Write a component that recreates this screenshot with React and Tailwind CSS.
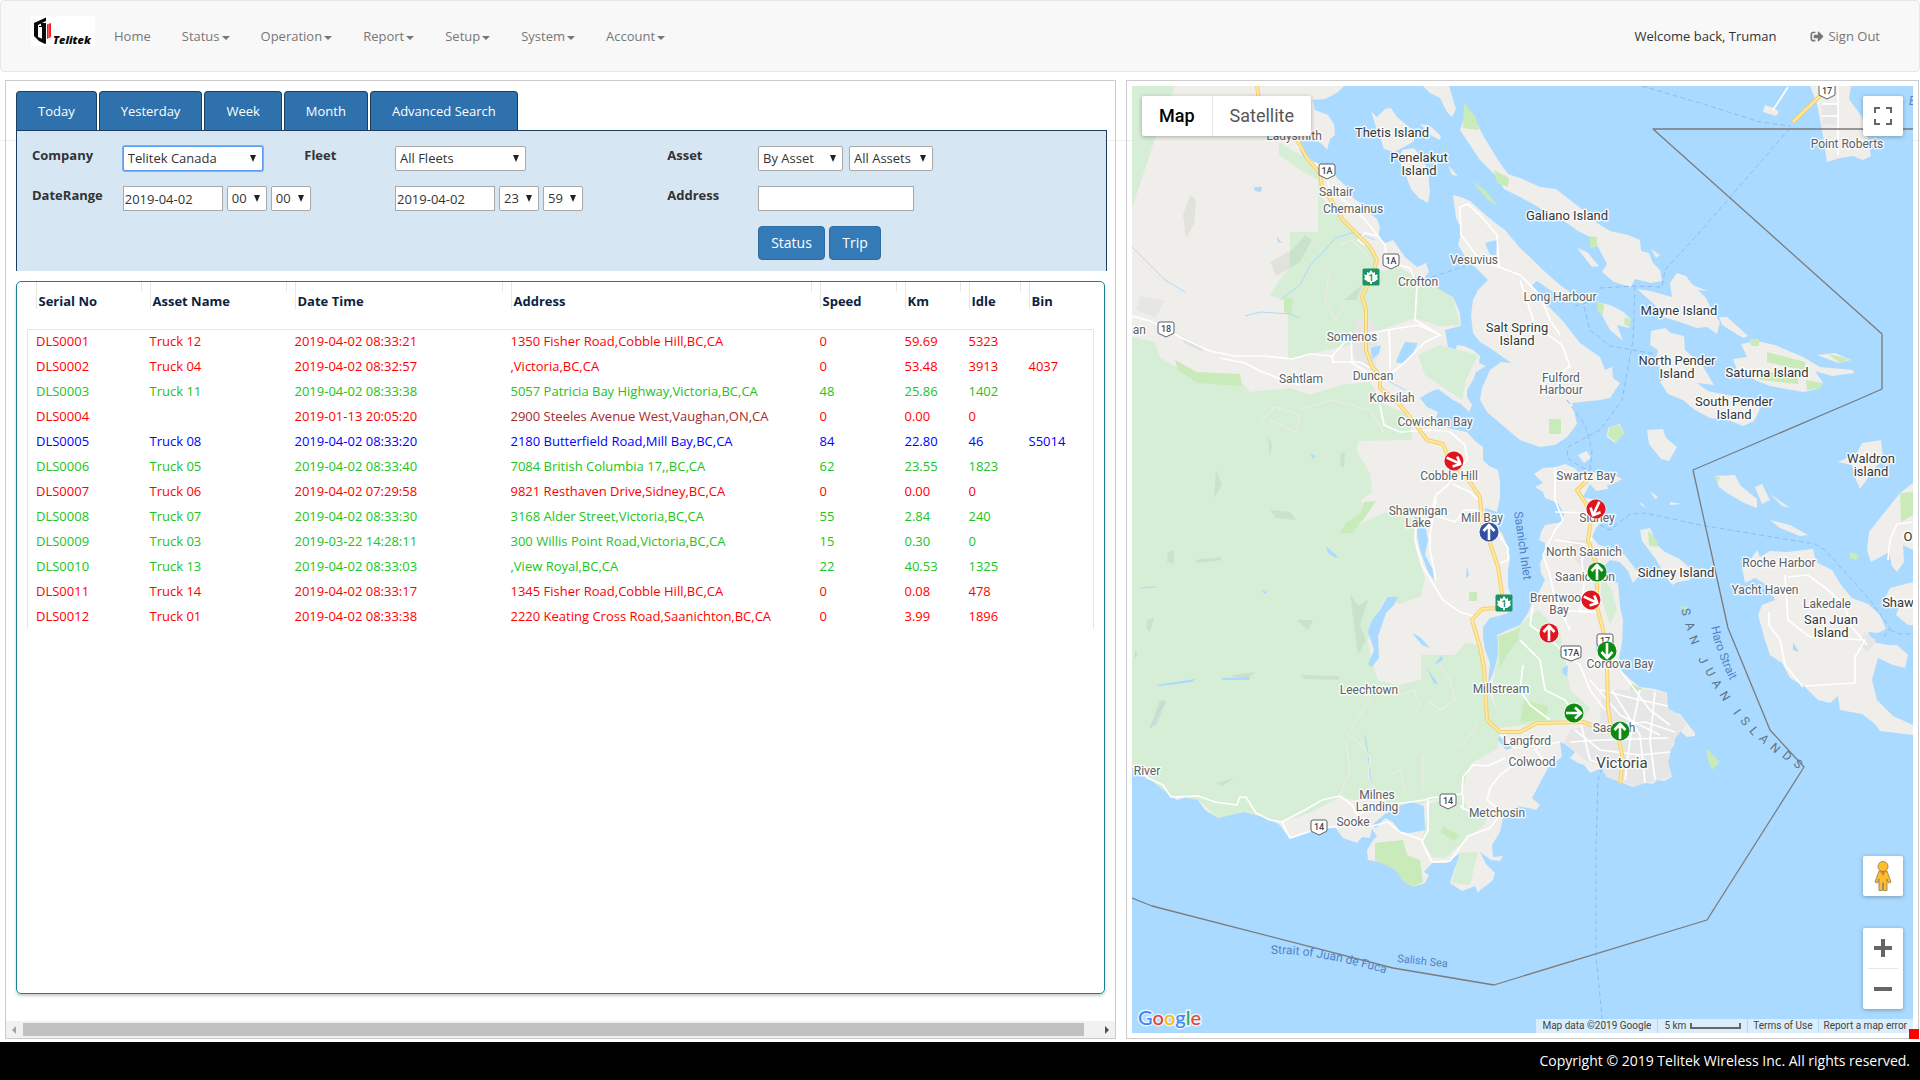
import { useState } from 'react';
import { FaSignOutAlt } from 'react-icons/fa';

const navItems = [
  { label: 'Home', menu: false },
  { label: 'Status', menu: true },
  { label: 'Operation', menu: true },
  { label: 'Report', menu: true },
  { label: 'Setup', menu: true },
  { label: 'System', menu: true },
  { label: 'Account', menu: true }
];

const tabs = ['Today', 'Yesterday', 'Week', 'Month', 'Advanced Search'];

const columns = [
  { label: 'Serial No', width: 'w-[114px]' },
  { label: 'Asset Name', width: 'w-[145px]' },
  { label: 'Date Time', width: 'w-[216px]' },
  { label: 'Address', width: 'w-[309px]' },
  { label: 'Speed', width: 'w-[85px]' },
  { label: 'Km', width: 'w-[64px]' },
  { label: 'Idle', width: 'w-[60px]' },
  { label: 'Bin', width: 'w-[73px]' }
];

const rowColors = {
  red: 'text-[#ff0000]',
  green: 'text-[#22c322]',
  blue: 'text-[#0000ff]'
};

const assets = [
  { color: 'red', cells: ['DLS0001', 'Truck 12', '2019-04-02 08:33:21', '1350 Fisher Road,Cobble Hill,BC,CA', '0', '59.69', '5323', ''] },
  { color: 'red', cells: ['DLS0002', 'Truck 04', '2019-04-02 08:32:57', ',Victoria,BC,CA', '0', '53.48', '3913', '4037'] },
  { color: 'green', cells: ['DLS0003', 'Truck 11', '2019-04-02 08:33:38', '5057 Patricia Bay Highway,Victoria,BC,CA', '48', '25.86', '1402', ''] },
  { color: 'red', stale: true, cells: ['DLS0004', '', '2019-01-13 20:05:20', '2900 Steeles Avenue West,Vaughan,ON,CA', '0', '0.00', '0', ''] },
  { color: 'blue', cells: ['DLS0005', 'Truck 08', '2019-04-02 08:33:20', '2180 Butterfield Road,Mill Bay,BC,CA', '84', '22.80', '46', 'S5014'] },
  { color: 'green', cells: ['DLS0006', 'Truck 05', '2019-04-02 08:33:40', '7084 British Columbia 17,,BC,CA', '62', '23.55', '1823', ''] },
  { color: 'red', cells: ['DLS0007', 'Truck 06', '2019-04-02 07:29:58', '9821 Resthaven Drive,Sidney,BC,CA', '0', '0.00', '0', ''] },
  { color: 'green', cells: ['DLS0008', 'Truck 07', '2019-04-02 08:33:30', '3168 Alder Street,Victoria,BC,CA', '55', '2.84', '240', ''] },
  { color: 'green', cells: ['DLS0009', 'Truck 03', '2019-03-22 14:28:11', '300 Willis Point Road,Victoria,BC,CA', '15', '0.30', '0', ''] },
  { color: 'green', cells: ['DLS0010', 'Truck 13', '2019-04-02 08:33:03', ',View Royal,BC,CA', '22', '40.53', '1325', ''] },
  { color: 'red', cells: ['DLS0011', 'Truck 14', '2019-04-02 08:33:17', '1345 Fisher Road,Cobble Hill,BC,CA', '0', '0.08', '478', ''] },
  { color: 'red', cells: ['DLS0012', 'Truck 01', '2019-04-02 08:33:38', '2220 Keating Cross Road,Saanichton,BC,CA', '0', '3.99', '1896', ''] }
];

// Map shapes

const land = [
  // Vancouver Island
  '1132,86 1344,86 1338,92 1333,95 1325,99 1313,100 1315,110 1328,115 1334,124 1335,135 1330,139 1327,150 1322,144 1312,138 1297,136 1297,142 1303,157 1312,161 1320,164 1333,170 1337,178 1347,187 1353,198 1362,204 1368,212 1377,219 1380,227 1378,237 1385,243 1393,240 1398,247 1405,257 1417,267 1426,263 1429,272 1424,278 1432,283 1437,290 1453,297 1460,313 1461,326 1445,330 1448,347 1453,360 1457,345 1464,346 1473,350 1480,356 1479,363 1486,366 1476,372 1473,380 1467,390 1467,397 1472,405 1469,412 1461,404 1453,400 1438,389 1430,392 1420,398 1427,407 1438,412 1436,418 1448,428 1467,432 1475,441 1483,447 1483,460 1489,466 1498,470 1500,482 1500,497 1497,512 1485,508 1484,514 1490,523 1502,533 1507,545 1510,557 1508,570 1508,587 1513,600 1508,613 1499,616 1490,618 1483,627 1483,638 1485,650 1490,663 1488,683 1492,676 1495,667 1498,655 1498,642 1497,635 1508,630 1520,625 1528,613 1533,600 1540,590 1545,580 1541,573 1540,563 1545,553 1545,543 1539,540 1541,532 1545,525 1562,522 1564,514 1558,503 1545,498 1543,492 1535,487 1543,483 1534,474 1543,468 1556,467 1565,464 1576,469 1580,475 1593,472 1601,475 1606,481 1612,474 1622,479 1613,484 1607,485 1608,489 1596,491 1590,484 1583,497 1595,500 1603,505 1605,513 1603,520 1596,528 1592,537 1599,545 1610,548 1625,555 1630,562 1638,572 1638,577 1633,583 1628,571 1620,562 1610,560 1603,567 1606,580 1618,583 1620,607 1623,620 1622,643 1619,658 1620,670 1631,680 1640,687 1655,689 1667,693 1668,710 1680,714 1687,723 1695,733 1695,736 1687,737 1680,731 1675,737 1674,746 1668,750 1670,756 1668,762 1672,777 1664,781 1657,780 1653,784 1645,783 1633,787 1620,782 1607,777 1602,768 1590,773 1584,765 1578,763 1570,758 1575,752 1565,744 1560,742 1562,757 1555,762 1548,768 1540,783 1532,798 1540,805 1536,810 1528,808 1517,806 1508,814 1503,818 1500,832 1492,845 1493,857 1503,856 1500,861 1491,860 1480,852 1486,864 1495,873 1493,880 1487,885 1480,890 1478,893 1475,886 1462,891 1450,883 1455,868 1460,853 1447,863 1432,863 1424,872 1429,875 1425,883 1413,887 1402,880 1398,872 1388,865 1380,862 1368,860 1367,850 1374,839 1377,836 1372,829 1370,838 1362,837 1357,843 1343,838 1335,827 1320,828 1307,833 1290,839 1284,831 1280,825 1267,818 1255,812 1243,812 1230,815 1218,818 1205,810 1198,800 1187,797 1177,800 1170,795 1163,785 1148,778 1138,768 1132,765',
  // Salt Spring
  '1453,195 1461,197 1470,201 1480,210 1494,222 1505,230 1520,248 1532,259 1543,270 1560,285 1575,296 1587,305 1570,300 1550,290 1537,281 1532,285 1545,303 1562,320 1580,343 1600,357 1605,370 1612,367 1613,378 1620,383 1610,398 1600,400 1572,403 1577,424 1567,437 1555,445 1540,447 1520,440 1508,430 1487,412 1480,400 1482,388 1490,370 1501,362 1511,363 1493,350 1480,342 1473,333 1471,315 1473,300 1478,290 1488,280 1478,270 1466,258 1458,245 1462,230 1456,218',
  // Galiano
  '1460,130 1464,119 1474,118 1484,137 1498,160 1508,174 1520,178 1540,187 1556,189 1570,200 1583,210 1597,223 1610,231 1628,235 1640,240 1641,251 1649,253 1653,263 1660,270 1662,281 1651,283 1635,279 1631,287 1614,282 1602,272 1607,264 1598,247 1590,237 1578,231 1560,218 1547,213 1535,205 1520,197 1504,189 1497,177 1480,160 1470,145',
  '1423,86 1430,93 1440,98 1447,112 1452,117 1456,109 1449,86',
  // Thetis, Penelakut
  '1371,111 1377,117 1385,109 1391,108 1397,117 1409,127 1417,134 1413,142 1402,148 1394,152 1384,149 1380,137 1376,127',
  '1402,150 1414,148 1422,158 1428,170 1430,192 1428,203 1419,198 1411,189 1406,176 1399,160',
  '1420,124 1430,126 1441,136 1440,140 1432,136',
  '1448,165 1458,176 1452,175',
  // Mayne
  '1637,289 1650,291 1672,297 1670,283 1677,273 1686,276 1692,284 1706,298 1712,310 1720,322 1717,334 1707,327 1697,328 1680,322 1663,317 1655,305',
  '1690,284 1708,291 1697,290',
  '1719,317 1727,317 1748,336 1743,338 1722,325',
  '1651,249 1660,255 1656,258',
  '1577,248 1587,252 1599,266 1592,267',
  // Prevost
  '1597,302 1610,305 1622,311 1631,319 1629,328 1617,325 1623,341 1610,330 1603,317',
  // Pender
  '1651,331 1665,328 1671,333 1684,336 1685,350 1702,365 1714,385 1697,383 1708,391 1727,395 1748,398 1760,409 1754,421 1743,426 1728,420 1710,418 1695,410 1683,400 1668,394 1660,382 1665,378 1656,360 1658,350 1650,345',
  // Saturna
  '1733,359 1747,357 1741,344 1757,341 1775,345 1803,357 1820,367 1853,370 1854,373 1832,376 1815,371 1823,383 1818,389 1803,392 1770,386 1757,381 1737,370',
  '1817,355 1835,353 1851,360 1838,363',
  // Point Roberts
  '1810,86 1851,86 1849,99 1862,117 1868,139 1871,156 1863,160 1853,156 1840,158 1827,162 1822,130 1817,104',
  '1765,105 1774,108 1779,112 1776,116 1763,112',
  // Gulf islands south
  '1647,430 1663,429 1666,438 1677,447 1669,461 1661,459 1649,444',
  '1578,455 1587,451 1591,458 1584,463',
  '1608,428 1620,424 1624,433 1615,443 1607,437',
  '1640,530 1650,528 1657,545 1665,552 1680,559 1692,570 1690,580 1678,582 1672,585 1665,575 1655,558 1642,541',
  '1650,491 1658,497 1655,499', '1640,502 1647,508 1641,505', '1670,502 1682,504 1670,505',
  '1715,476 1735,475 1740,485 1757,499 1757,508 1744,503 1727,493 1719,487',
  '1755,487 1762,484 1770,500 1762,504', '1770,494 1790,508 1782,506',
  '1770,520 1790,525 1808,535 1800,536 1780,528',
  '1838,462 1857,453 1862,443 1881,440 1883,457 1868,478 1860,489 1856,480 1852,465',
  // Orcas
  '1913,483 1900,493 1888,508 1880,518 1869,532 1867,550 1871,562 1884,555 1889,552 1892,566 1897,572 1904,562 1903,545 1913,550',
  // San Juan
  '1742,567 1750,560 1757,550 1760,557 1770,551 1787,552 1813,549 1816,562 1832,570 1841,585 1852,598 1868,604 1880,615 1886,629 1878,633 1868,632 1872,642 1888,645 1897,645 1908,655 1905,668 1893,665 1878,658 1872,680 1877,700 1893,716 1913,725 1913,735 1880,731 1875,724 1862,714 1840,710 1838,696 1830,703 1818,700 1804,686 1790,678 1782,663 1770,655 1765,640 1758,615 1762,605 1775,600 1767,585 1755,578 1745,583',
  // Shaw
  '1913,582 1890,588 1884,600 1900,605 1896,615 1908,625 1913,625'
];

const forest = [
  '1132,86 1175,86 1157,133 1132,208',
  '1279,142 1303,157 1320,167 1320,196 1340,217 1355,233 1370,246 1377,258 1377,272 1400,268 1427,282 1453,297 1460,325 1438,326 1415,318 1395,325 1368,335 1352,345 1318,352 1288,360 1288,300 1270,296 1278,282 1290,267 1290,232 1318,232 1318,180 1300,170 1279,155',
  '1132,337 1155,342 1160,358 1175,366 1197,378 1237,377 1250,392 1290,388 1310,395 1340,385 1370,382 1384,404 1410,415 1412,440 1358,441 1357,452 1370,473 1372,492 1361,500 1364,515 1352,528 1386,512 1412,518 1416,550 1425,578 1421,596 1399,604 1386,596 1374,620 1368,640 1372,662 1378,680 1397,685 1421,680 1421,655 1455,655 1465,643 1480,645 1488,690 1500,720 1498,748 1470,764 1461,795 1430,800 1418,806 1390,806 1372,798 1353,800 1340,797 1312,812 1283,822 1267,818 1243,812 1218,818 1198,800 1170,795 1148,778 1132,765',
  '1418,355 1440,345 1478,355 1466,380 1462,400 1440,385 1425,375',
  '1430,803 1462,795 1468,810 1490,812 1484,825 1465,840 1445,858 1432,857 1422,840',
  '1460,853 1478,852 1474,868 1470,885 1452,883',
  '1500,640 1520,625 1538,610 1560,632 1570,690 1590,708 1585,716 1545,722 1500,728 1492,690',
  '1600,575 1612,590 1617,610 1610,625 1602,600'
];

const parks = [
  '1375,843 1403,840 1407,855 1420,860 1423,882 1413,887 1402,880 1396,870 1375,860',
  '1464,103 1475,116 1479,130 1463,128', '1494,170 1509,178 1508,187 1497,183',
  '1472,181 1485,190 1498,206 1488,200', '1175,360 1197,372 1240,374 1242,386 1198,383 1178,370',
  '1443,826 1459,835 1455,841 1441,833', '1364,502 1376,501 1366,516 1352,533 1340,533 1346,523 1361,513',
  '1590,236 1597,237 1597,247 1590,248', '1767,352 1778,355 1805,362 1805,371 1767,362',
  '1757,371 1798,375 1798,384 1760,380', '1806,380 1822,383 1820,389 1807,390',
  '1750,339 1759,339 1759,346 1751,346', '1828,354 1850,359 1840,363', '1549,419 1561,419 1561,434 1549,434',
  '1609,428 1620,425 1624,434 1616,442 1608,436', '1900,493 1913,492 1913,515 1901,522',
  '1648,530 1658,542 1657,547 1649,546', '1850,552 1859,555 1856,561 1850,558',
  '1680,606 1689,607 1684,611', '1630,683 1642,688 1634,700 1631,697', '1498,636 1520,628 1518,640 1507,655 1500,668',
  '1524,700 1548,706 1546,720 1520,722', '1469,592 1477,592 1477,601 1469,601',
  '1597,300 1604,305 1603,314 1598,312', '1625,317 1631,319 1629,327 1624,324', '1706,748 1720,762 1712,770 1708,760',
  '1284,298 1293,299 1291,315 1284,312', '1714,476 1720,477 1718,483'
];

const urban = [
  '1602,690 1650,690 1666,694 1668,708 1680,716 1686,725 1674,740 1668,762 1671,777 1633,786 1606,776 1600,766 1585,760 1564,742 1570,730 1600,722',
  '1822,104 1838,104 1838,125 1822,124', '1356,320 1372,318 1378,340 1376,366 1368,370 1352,356',
  '1570,540 1590,540 1598,560 1590,575 1575,560', '1864,632 1876,640 1868,652 1860,645', '1140,296 1165,300 1156,318 1136,310'
];

const lakes = [
  '1414,516 1424,520 1428,540 1425,555 1433,570 1434,580 1428,572 1420,550 1417,535',
  '1387,597 1398,597 1394,605 1386,613 1382,625 1378,636 1379,658 1372,667 1368,664 1374,650 1368,632 1372,620 1380,610',
  '1405,342 1418,343 1412,355 1402,364 1396,362 1400,352', '1371,348 1381,345 1379,354 1372,359',
  '1372,825 1385,814 1400,806 1412,802 1424,806 1425,830 1410,833 1400,832 1393,822 1385,818 1376,828',
  '1326,546 1338,557 1336,558 1328,553', '1156,685 1195,679 1192,682 1160,686', '1222,678 1250,677 1249,680 1222,680',
  '1254,187 1262,187 1261,192 1255,191', '1412,633 1420,637 1430,648 1422,645', '1427,668 1438,684 1434,683',
  '1442,655 1443,660 1434,665', '1485,243 1497,240 1496,255 1490,255', '1563,668 1568,665 1567,677 1562,672',
  '1597,641 1604,648 1602,655 1596,650', '1500,734 1512,748 1506,750 1498,740', '1793,642 1799,652 1793,650', '1467,567 1469,575 1466,578',
  '1261,590 1267,592 1265,594', '1311,454 1316,456 1312,459', '1277,237 1282,243 1278,242', '1135,650 1137,655 1135,658'
];

const hills = [
  '1183,215 1190,195 1196,200 1194,225 1186,238', '1270,262 1292,250 1305,235 1312,240 1300,262 1276,276',
  '1344,300 1358,288 1363,285 1356,300', '1147,620 1154,618 1150,632 1146,628', '1168,552 1174,550 1174,564 1167,562',
  '1350,593 1358,606 1368,600 1360,625 1366,640 1358,655 1354,625', '1270,510 1290,512 1296,520 1276,518',
  '1233,675 1256,672 1250,677 1232,677', '1216,470 1222,485 1214,498', '1297,620 1313,620 1308,630', '1268,436 1272,445 1270,458',
  '1341,452 1345,454 1344,468 1340,466', '1180,335 1200,345 1204,352 1185,344', '1194,560 1220,557 1222,560 1198,563',
  '1160,700 1166,702 1156,725 1150,728', '1300,675 1340,676 1338,680 1304,679', '1216,783 1235,778 1222,786'
];

const minorRoads = [
  '1132,316 1150,321 1180,337 1210,351 1235,356 1265,356 1292,359 1310,354 1332,356 1333,362 1360,362 1370,368',
  '1220,358 1245,363 1258,370 1278,378 1300,385', '1332,356 1345,342 1370,333 1400,328 1418,325 1440,335 1425,342 1405,362 1390,374 1375,375',
  '1297,145 1310,160 1325,172 1330,190 1350,205 1367,222 1385,245 1387,262 1410,268 1417,285 1415,320 1425,326 1442,336',
  '1380,405 1384,425 1400,432 1430,430 1450,432 1465,445 1467,460 1455,475 1448,485 1436,495 1432,510',
  '1452,484 1470,492 1478,500', '1417,520 1415,540 1422,565 1432,582 1443,600 1460,612 1473,616',
  '1436,500 1430,535 1430,550 1436,580', '1436,516 1455,522 1465,510 1480,510', '1497,532 1508,548 1508,560 1500,563',
  '1378,236 1365,233 1358,240 1365,245', '1351,332 1352,363 1367,372', '1389,330 1390,352 1390,374',
  '1132,766 1148,778 1163,785 1171,797 1198,796 1215,802 1237,805 1240,797 1246,797 1256,813 1270,820 1282,822 1305,810 1322,800 1340,796 1352,805 1357,815',
  '1282,822 1290,838 1320,828 1345,826', '1357,815 1380,806 1410,802 1425,800 1430,798 1462,794 1463,777 1473,765 1488,766 1505,758',
  '1428,800 1428,830 1422,842 1432,862 1450,861 1468,836 1490,828 1502,812', '1372,826 1388,822 1400,832 1422,840',
  '1502,812 1487,800 1490,788 1500,775 1520,760', '1460,806 1470,812 1488,810', '1463,810 1463,795',
  '1555,467 1555,500 1563,520 1555,530 1543,555 1550,575 1555,600 1570,630', '1555,512 1590,513', '1555,540 1590,545',
  '1592,537 1582,560 1584,585 1580,612 1600,612', '1533,605 1530,625 1550,640 1580,665 1590,690 1605,710',
  '1520,640 1540,660 1545,690 1565,700 1575,715', '1554,611 1600,611', '1620,670 1635,690 1650,710 1670,725',
  '1523,665 1520,690 1530,705 1550,720', '1600,690 1640,700 1668,706', '1590,680 1620,715 1660,735', '1612,690 1640,735 1645,783',
  '1640,690 1630,740 1625,780', '1575,730 1600,750 1640,755 1670,752', '1570,742 1600,740 1668,738', '1655,692 1650,740 1655,780',
  '1550,735 1535,750 1548,765', '1500,735 1515,748 1545,745 1560,742', '1580,720 1590,760 1605,765', '1605,726 1645,722 1675,732',
  '1460,207 1468,204 1480,215 1497,235 1499,267 1520,275 1540,295 1550,320 1560,335', '1460,207 1461,235 1480,260 1499,267',
  '1520,280 1535,325 1562,345 1570,366 1558,376', '1838,86 1838,155', '1822,104 1838,104', '1822,116 1838,116',
  '1773,110 1788,87', '1788,577 1808,575 1828,590 1845,605 1850,625 1867,645', '1785,575 1788,620 1810,637 1865,640 1855,657 1855,683 1805,686',
  '1769,612 1769,625 1780,640 1785,665 1803,687', '1913,522 1897,524 1890,540 1888,560'
];

const trails = [
  '1348,735 1362,745 1370,758 1368,775 1373,790', '1370,700 1360,715 1350,730', '1390,775 1400,770 1404,790',
  '1262,420 1275,407 1300,415 1296,432 1270,420', '1300,410 1330,400 1370,410 1384,432', '1400,695 1414,690 1420,705 1412,715',
  '1440,665 1450,680 1455,700 1440,710 1428,700', '1460,748 1470,735 1478,725', '1330,270 1325,300 1335,320 1345,305',
  '1340,245 1352,240 1362,250 1372,262', '1423,755 1423,790', '1346,740 1350,770 1340,795'
];

const streams = [
  '1310,265 1325,250 1335,238 1355,232 1375,240', '1280,300 1300,285 1310,265', '1245,316 1260,312 1290,314 1300,318',
  '1132,247 1150,265 1165,280 1185,292', '1365,735 1368,755 1372,790', '1150,728 1165,700', '1140,588 1156,587', '1370,372 1390,382 1405,390'
];

const highways = [
  '1257,86 1259,100 1275,125 1297,140 1307,158 1320,173 1322,187 1333,203 1343,220 1360,237 1370,247 1377,260 1373,273 1362,297 1366,310 1366,350 1372,367 1380,375 1380,388 1398,403 1410,417 1427,440 1443,444 1450,461 1470,482 1480,497 1482,523 1489,540 1498,567 1502,594 1497,608 1482,609 1472,620 1480,647 1484,667 1487,720 1500,732 1520,732 1537,723 1583,722 1600,728 1618,735 1623,760 1620,783',
  '1588,480 1577,490 1592,513 1588,540 1597,567 1597,607 1603,630 1607,667 1608,707 1612,735',
  '1793,122 1822,94'
];

const ferries = [
  '1642,86 1700,103 1760,122 1790,126', '1790,128 1700,232 1665,270 1662,287 1635,286 1600,288 1586,303 1575,306',
  '1635,286 1633,340 1622,400 1600,430 1568,447 1567,458 1590,472', '1584,307 1590,330 1610,346 1655,354',
  '1567,400 1585,425 1592,450 1590,470', '1600,525 1610,530 1630,514 1645,513 1700,525 1815,544 1825,550 1870,600 1890,628 1882,640',
  '1890,630 1900,634 1913,634', '1432,277 1465,266', '1602,768 1598,780 1596,850 1596,955 1602,1018 1603,1033'
];

const placeLabels = [
  { text: ['Ladysmith'], x: 1294, y: 140 }, { text: ['Saltair'], x: 1336, y: 196 }, { text: ['Chemainus'], x: 1353, y: 213 },
  { text: ['Crofton'], x: 1418, y: 286 }, { text: ['Vesuvius'], x: 1474, y: 264 }, { text: ['Somenos'], x: 1352, y: 341 },
  { text: ['Sahtlam'], x: 1301, y: 383 }, { text: ['Duncan'], x: 1373, y: 380 }, { text: ['Koksilah'], x: 1392, y: 402 },
  { text: ['Cowichan Bay'], x: 1435, y: 426 }, { text: ['Cobble Hill'], x: 1449, y: 480 }, { text: ['Shawnigan', 'Lake'], x: 1418, y: 515 },
  { text: ['Mill Bay'], x: 1482, y: 522 }, { text: ['Leechtown'], x: 1369, y: 694 }, { text: ['Millstream'], x: 1501, y: 693 },
  { text: ['Langford'], x: 1527, y: 745 }, { text: ['Colwood'], x: 1532, y: 766 }, { text: ['Metchosin'], x: 1497, y: 817 },
  { text: ['Milnes', 'Landing'], x: 1377, y: 799 }, { text: ['Sooke'], x: 1353, y: 826 }, { text: ['River'], x: 1147, y: 775 },
  { text: ['nan'], x: 1136, y: 334 }, { text: ['Long Harbour'], x: 1560, y: 301 }, { text: ['Fulford', 'Harbour'], x: 1561, y: 382 },
  { text: ['Point Roberts'], x: 1847, y: 148 }, { text: ['Swartz Bay'], x: 1586, y: 480 }, { text: ['Sidney'], x: 1597, y: 522 },
  { text: ['North Saanich'], x: 1584, y: 556 }, { text: ['Saanichton'], x: 1585, y: 581 }, { text: ['Brentwood', 'Bay'], x: 1559, y: 602 },
  { text: ['Cordova Bay'], x: 1620, y: 668 }, { text: ['Saanich'], x: 1614, y: 732 }, { text: ['Roche Harbor'], x: 1779, y: 567 },
  { text: ['Yacht Haven'], x: 1765, y: 594 }, { text: ['Lakedale'], x: 1827, y: 608 }
];

const islandLabels = [
  { text: ['Thetis Island'], x: 1392, y: 137 }, { text: ['Penelakut', 'Island'], x: 1419, y: 162 }, { text: ['Galiano Island'], x: 1567, y: 220 },
  { text: ['Salt Spring', 'Island'], x: 1517, y: 332 }, { text: ['Mayne Island'], x: 1679, y: 315 }, { text: ['North Pender', 'Island'], x: 1677, y: 365 },
  { text: ['Saturna Island'], x: 1767, y: 377 }, { text: ['South Pender', 'Island'], x: 1734, y: 406 }, { text: ['Waldron', 'island'], x: 1871, y: 463 },
  { text: ['Sidney Island'], x: 1676, y: 577 }, { text: ['San Juan', 'Island'], x: 1831, y: 624 }, { text: ['Shaw'], x: 1898, y: 607 }, { text: ['O'], x: 1908, y: 541 }
];

const sanJuanLetters = [
  ['S', 1686, 612, 78], ['A', 1690, 626, 70], ['N', 1694, 640, 68], ['J', 1703, 660, 64], ['U', 1710, 672, 62],
  ['A', 1717, 684, 60], ['N', 1725, 696, 58], ['I', 1737, 712, 54], ['S', 1745, 721, 52], ['L', 1754, 731, 50],
  ['A', 1764, 739, 46], ['N', 1775, 748, 44], ['D', 1787, 756, 40], ['S', 1798, 764, 40]
];

const shields = [
  { text: '1A', x: 1327, y: 171 }, { text: '1A', x: 1391, y: 261 }, { text: '18', x: 1166, y: 329 }, { text: '17', x: 1827, y: 91 },
  { text: '17', x: 1605, y: 641 }, { text: '17A', x: 1571, y: 653 }, { text: '14', x: 1448, y: 801 }, { text: '14', x: 1319, y: 827 }
];

const markers = [
  { x: 1454, y: 461, angle: 115, fill: '#e0161f' }, { x: 1489, y: 532, angle: 0, fill: '#324fa2' },
  { x: 1596, y: 509, angle: 205, fill: '#e0161f' }, { x: 1597, y: 572, angle: 0, fill: '#0c8a12' },
  { x: 1591, y: 600, angle: 115, fill: '#e0161f' }, { x: 1549, y: 633, angle: 0, fill: '#e0161f' },
  { x: 1607, y: 651, angle: 180, fill: '#0c8a12' }, { x: 1574, y: 713, angle: 90, fill: '#0c8a12' },
  { x: 1620, y: 731, angle: 0, fill: '#0c8a12' }
];

function Logo() {
  return (
    <svg className="w-16 h-[30px]" viewBox="0 0 64 30" role="img" aria-label="Telitek">
      <rect width="64" height="30" fill="#fff" />
      <path d="M3 7 15 1.5V5L7 9v12l7 3v4L8 25 3 20Z" fill="#0a0a0a" />
      <path d="M8 10h2V7h5v21l-4-3V11H8Z" fill="#0a0a0a" />
      <path d="M16 8.5 20 7v14l-4 2Z" fill="#ed1c24" />
      <path d="M15.5 8.5v15M17.8 8v14.5" stroke="#fff" strokeWidth=".4" />
      <text x="22" y="28" fontSize="11" fontWeight="800" fontStyle="italic" fontFamily="Open Sans, sans-serif" fill="#0a0a0a">Telitek</text>
    </svg>
  );
}

function NavBar() {
  return (
    <nav className="flex h-18 items-start justify-between rounded border border-[#e7e7e7] bg-[#f8f8f8] px-[30px] text-[#777]">
      <div className="flex gap-px">
        <a href="#" className="mt-[15px] mr-[3px]">
          <Logo />
        </a>
        {navItems.map((item) => (
          <a key={item.label} href="#" className="flex items-center px-[15px] pt-[25px] leading-5">
            {item.label}
            {item.menu && <span className="ml-[2px] mt-1 border-x-4 border-t-4 border-x-transparent border-t-[#777]" />}
          </a>
        ))}
      </div>
      <div className="flex gap-[34px] pr-[9px] pt-[25px] leading-5">
        <span className="text-[#333]">Welcome back, Truman</span>
        <a href="#" className="flex items-center gap-1">
          <FaSignOutAlt className="h-[13px] w-[14px]" />
          Sign Out
        </a>
      </div>
    </nav>
  );
}

function Select({ label, options, className, focused }) {
  return (
    <span className="relative inline-block">
      <select
        aria-label={label}
        className={`h-[25px] appearance-none rounded-[2px] border bg-white pl-1 pt-px text-[#333] outline-none ${
          focused ? 'border-[#5b9bf0] ring-1 ring-[#7fb0f5]' : 'border-[#a9a9a9]'
        } ${className}`}
      >
        {options.map((option) => (
          <option key={option}>{option}</option>
        ))}
      </select>
      <span className="pointer-events-none absolute right-[7px] top-[9px] border-x-[3px] border-t-[7px] border-x-transparent border-t-[#222]" />
    </span>
  );
}

function DateFields({ name, hour, minute, className }) {
  return (
    <div className={`flex gap-1 px-[15px] ${className}`}>
      <input aria-label={`${name} date`} defaultValue="2019-04-02" className="h-[25px] w-[100px] border border-[#a9a9a9] bg-white px-px" />
      <Select label={`${name} hour`} options={[hour]} className="w-[40px]" />
      <Select label={`${name} minute`} options={[minute]} className="w-[40px]" />
    </div>
  );
}

function SearchForm() {
  const [address, setAddress] = useState('');

  return (
    <form
      onSubmit={(e) => e.preventDefault()}
      className="h-[141px] border-x border-t border-[#1c3d60] bg-[#d6e6f3] pt-[15px] text-[#333]"
    >
      <div className="grid h-10 grid-cols-12 items-start">
        <span className="px-[15px] font-bold leading-[18px]">Company</span>
        <div className="col-span-2 px-[15px]">
          <Select label="Company" options={['Telitek Canada']} className="w-[140px]" focused />
        </div>
        <span className="px-[15px] font-bold leading-[18px]">Fleet</span>
        <div className="col-span-3 px-[15px]">
          <Select label="Fleet" options={['All Fleets']} className="w-[131px]" />
        </div>
        <span className="px-[15px] font-bold leading-[18px]">Asset</span>
        <div className="col-span-4 flex gap-[6px] px-[15px]">
          <Select label="Asset filter" options={['By Asset']} className="w-[85px]" />
          <Select label="Asset" options={['All Assets']} className="w-[84px]" />
        </div>
      </div>
      <div className="grid h-10 grid-cols-12 items-start">
        <span className="px-[15px] font-bold leading-[18px]">DateRange</span>
        <DateFields name="From" hour="00" minute="00" className="col-span-3" />
        <DateFields name="To" hour="23" minute="59" className="col-span-3" />
        <label htmlFor="address" className="px-[15px] font-bold leading-[18px]">Address</label>
        <div className="col-span-4 px-[15px]">
          <input
            id="address"
            value={address}
            onChange={(e) => setAddress(e.target.value)}
            className="h-[25px] w-[156px] border border-[#a9a9a9] bg-white px-px"
          />
        </div>
      </div>
      <div className="grid grid-cols-12">
        <div className="col-span-4 col-start-9 flex gap-1 px-[15px] text-sm">
          <button type="submit" className="h-[34px] w-[67px] rounded border border-[#2e6da4] bg-[#337ab7] text-white">Status</button>
          <button type="button" className="h-[34px] w-[52px] rounded border border-[#2e6da4] bg-[#337ab7] text-white">Trip</button>
        </div>
      </div>
    </form>
  );
}

function AssetTable() {
  return (
    <div className="mr-[2px] mb-[27px] mt-[10px] flex-1 rounded-[5px] border border-[#1b7f8f] pl-[10px] pr-[11px] shadow-[0_2px_3px_rgba(0,0,0,0.2)]">
      <table className="w-full table-fixed border-collapse">
        <thead>
          <tr className="h-[47px] align-top text-left text-[#0b1f3f]">
            {columns.map((col) => (
              <th
                key={col.label}
                className={`${col.width} bg-[linear-gradient(#e6e6e6,#e6e6e6)] bg-[length:1px_10px] bg-right-top bg-no-repeat p-0 pl-2 font-bold last:bg-none`}
              >
                <div className="h-[27px] border-l border-[#e6e6e6] pl-[2px] pt-[9px] leading-5">{col.label}</div>
              </th>
            ))}
          </tr>
        </thead>
        <tbody className="border-x border-t border-[#e6e6e6]">
          {assets.map((asset) => (
            <tr key={asset.cells[0]} className={`h-[25px] ${rowColors[asset.color]}`}>
              {asset.cells.map((cell, i) => (
                <td key={columns[i].label} className={`whitespace-nowrap p-0 pl-2 ${asset.stale && i === 3 ? 'text-[#a52a2a]' : ''}`}>
                  {cell}
                </td>
              ))}
            </tr>
          ))}
        </tbody>
      </table>
    </div>
  );
}

function ScrollBar() {
  return (
    <div className="flex h-[17px] items-center justify-between bg-[#f1f1f1]" aria-hidden="true">
      <span className="ml-[6px] border-y-4 border-r-4 border-y-transparent border-r-[#a3a3a3]" />
      <span className="ml-[7px] mr-[21px] h-[13px] flex-1 bg-[#c1c1c1]" />
      <span className="mr-[6px] border-y-4 border-l-4 border-y-transparent border-l-[#505050]" />
    </div>
  );
}

function MapLabel({ label, size, fill }) {
  return (
    <text x={label.x} y={label.y} fontSize={size} fill={fill} textAnchor="middle" stroke="#fff" strokeOpacity=".8" strokeWidth="3" paintOrder="stroke">
      {label.text.map((line, i) => (
        <tspan key={line} x={label.x} dy={i === 0 ? 0 : size}>{line}</tspan>
      ))}
    </text>
  );
}

function Shield({ text, x, y }) {
  const w = text.length > 2 ? 10 : 8;
  return (
    <g transform={`translate(${x} ${y})`}>
      <path
        d={`M${-w} -5Q${-w} -7 ${-w + 2} -7H${w - 2}Q${w} -7 ${w} -5V3Q${w} 5 ${w - 2} 5L0 8 ${-w + 2} 5Q${-w} 5 ${-w} 3Z`}
        fill="#fff"
        stroke="#5a6066"
      />
      <text y="3" fontSize="9" fontWeight="500" textAnchor="middle" fill="#444">{text}</text>
    </g>
  );
}

function TransCanada({ x, y }) {
  return (
    <g transform={`translate(${x} ${y})`}>
      <rect x="-8.5" y="-8.5" width="17" height="17" rx="1.5" fill="#1a9366" />
      <path d="M0-7 2-4 4-5 4-2 7-2.5 6 0 7 2 3 5H1V7H-1V5H-3L-7 2-6 0-7-2.5-4-2-4-5-2-4Z" fill="#fff" />
      <text y="4" fontSize="9" fontWeight="700" textAnchor="middle" fill="#1a9366">1</text>
    </g>
  );
}

function MapCanvas() {
  return (
    <svg
      className="absolute inset-0 h-full w-full"
      viewBox="1132 86 781 947"
      preserveAspectRatio="xMidYMid slice"
      fontFamily="Roboto, sans-serif"
      strokeLinejoin="round"
    >
      <rect x="1132" y="86" width="781" height="947" fill="#aadaff" />
      {land.map((p) => <polygon key={p} points={p} fill="#f0eeea" />)}
      {forest.map((p) => <polygon key={p} points={p} fill="#d6edd6" />)}
      {parks.map((p) => <polygon key={p} points={p} fill="#c8ebb9" />)}
      {urban.map((p) => <polygon key={p} points={p} fill="#e6e6e6" />)}
      {hills.map((p) => <polygon key={p} points={p} fill="#5c6b5c" opacity=".09" />)}
      {lakes.map((p) => <polygon key={p} points={p} fill="#aadaff" />)}
      <g fill="none">
        {streams.map((p) => <polyline key={p} points={p} stroke="#aadaff" />)}
        {trails.map((p) => <polyline key={p} points={p} stroke="#efece6" strokeWidth="1.2" />)}
        {minorRoads.map((p) => <polyline key={p} points={p} stroke="#fff" strokeWidth="1.7" />)}
        {highways.map((p) => <polyline key={p} points={p} stroke="#f5cf6b" strokeWidth="4" />)}
        {highways.map((p) => <polyline key={p} points={p} stroke="#ffe9a0" strokeWidth="2" />)}
        {ferries.map((p) => <polyline key={p} points={p} stroke="#8cbdf2" strokeDasharray="5 3" />)}
        <polyline
          points="1913,129 1653,129 1882,334 1882,389 1857,400 1693,470 1728,628 1770,730 1804,767 1707,920 1520,977 1494,985 1393,968 1152,906 1132,898"
          stroke="#7b7b7b"
          strokeWidth="1.3"
        />
      </g>

      {placeLabels.map((label) => <MapLabel key={label.text[0]} label={label} size={12} fill="#5b6268" />)}
      {islandLabels.map((label) => <MapLabel key={label.text[0]} label={label} size={13} fill="#34393d" />)}
      <MapLabel label={{ text: ['Victoria'], x: 1622, y: 768 }} size={15} fill="#454545" />

      <g fontSize="12" fill="#5082c8">
        <path id="fuca" d="M1271 954 Q1310 952 1384 973" fill="none" />
        <text><textPath href="#fuca">Strait of Juan de Fuca</textPath></text>
        <text fontSize="11" transform="translate(1397 962) rotate(6)">Salish Sea</text>
        <text transform="translate(1514 512) rotate(82)">Saanich Inlet</text>
        <path id="haro" d="M1711 627 Q1716 652 1730 680" fill="none" />
        <text><textPath href="#haro">Haro Strait</textPath></text>
        <text x="1909" y="105" fontStyle="italic">B</text>
      </g>
      <g fontSize="12" fill="#5f7388" textAnchor="middle">
        {sanJuanLetters.map(([letter, x, y, angle]) => (
          <text key={`${x}-${y}`} transform={`translate(${x} ${y}) rotate(${angle})`} dy="4">{letter}</text>
        ))}
      </g>

      {shields.map((s) => <Shield key={`${s.x}-${s.y}`} text={s.text} x={s.x} y={s.y} />)}
      <TransCanada x={1371} y={277} />
      <TransCanada x={1504} y={603} />

      {markers.map((m) => (
        <g key={`${m.x}-${m.y}`} transform={`translate(${m.x} ${m.y}) rotate(${m.angle})`}>
          <circle r="10.5" fill="#fff" opacity=".5" />
          <circle r="9.5" fill={m.fill} />
          <path d="M0 8V-6M-5.500-1 0-7 5.500-1" fill="none" stroke="#fff" strokeWidth="2.6" />
        </g>
      ))}
    </svg>
  );
}

function FleetMap() {
  const [mapType, setMapType] = useState('Map');

  return (
    <div className="relative h-full overflow-hidden font-['Roboto',sans-serif]">
      <MapCanvas />
      <div className="absolute left-[10px] top-[10px] flex rounded-[2px] bg-white text-[18px] shadow-[0_1px_4px_rgba(0,0,0,0.3)]">
        {['Map', 'Satellite'].map((type) => (
          <button
            key={type}
            onClick={() => setMapType(type)}
            className={`h-10 border-l border-[#e8e8e8] px-[17px] pb-[2px] first:border-l-0 ${mapType === type ? 'font-medium text-black' : 'text-[#565656]'}`}
          >
            {type}
          </button>
        ))}
      </div>
      <button aria-label="Toggle fullscreen" className="absolute right-[10px] top-[10px] flex size-10 items-center justify-center rounded-[2px] bg-white shadow-[0_1px_4px_rgba(0,0,0,0.3)]">
        <svg className="size-[18px]" viewBox="0 0 18 18" fill="none" stroke="#666" strokeWidth="2">
          <path d="M1 6V1H6M12 1H17V6M17 12V17H12M6 17H1V12" />
        </svg>
      </button>
      <button aria-label="Street View" className="absolute bottom-[137px] right-[10px] flex size-10 items-center justify-center rounded-[2px] bg-white shadow-[0_1px_4px_rgba(0,0,0,0.3)]">
        <svg className="h-[30px] w-[18px]" viewBox="0 0 18 30" stroke="#8a7a55" strokeWidth=".8">
          <path d="M5 10H13L17 21 14.5 22 13 18V29.5H9.5V22H8.5V29.5H5V18L3.5 22 1 21Z" fill="#fdbd2d" />
          <path d="M6 10.5H12L9 15Z" fill="#e5812d" stroke="none" />
          <circle cx="9" cy="5.5" r="5" fill="#fdbd2d" />
        </svg>
      </button>
      <div className="absolute bottom-6 right-[10px] flex w-10 flex-col items-center rounded-[2px] bg-white shadow-[0_1px_4px_rgba(0,0,0,0.3)]">
        <button aria-label="Zoom in" className="flex size-10 items-center justify-center">
          <svg className="size-[18px]" viewBox="0 0 18 18" stroke="#666" strokeWidth="4"><path d="M9 0V18M0 9H18" /></svg>
        </button>
        <span className="h-px w-[30px] bg-[#e6e6e6]" />
        <button aria-label="Zoom out" className="flex size-10 items-center justify-center">
          <svg className="size-[18px]" viewBox="0 0 18 18" stroke="#666" strokeWidth="4"><path d="M0 9H18" /></svg>
        </button>
      </div>
      <svg className="absolute bottom-0 left-[4px] h-[28px] w-[70px]" viewBox="0 0 70 28">
        <text x="2" y="20" fontSize="20" fontWeight="500" fontFamily="Lato, sans-serif" stroke="#fff" strokeOpacity=".7" strokeWidth="3" paintOrder="stroke">
          <tspan fill="#4285f4">G</tspan>
          <tspan fill="#ea4335">o</tspan>
          <tspan fill="#fbbc05">o</tspan>
          <tspan fill="#4285f4">g</tspan>
          <tspan fill="#34a853">l</tspan>
          <tspan fill="#ea4335">e</tspan>
        </text>
      </svg>
      <div className="absolute bottom-0 right-0 flex h-[14px] gap-px text-[10px] leading-[14px] text-[#444]">
        <span className="bg-[#e0eef9]/90 px-[6px]">Map data ©2019 Google</span>
        <span className="flex items-center gap-1 bg-[#e0eef9]/90 px-[6px]">
          5 km
          <span className="h-[6px] w-[51px] border-x-2 border-b-2 border-[#666]" />
        </span>
        <a href="#" className="bg-[#e0eef9]/90 px-[5px]">Terms of Use</a>
        <a href="#" className="bg-[#e0eef9]/90 pl-[5px] pr-[6px]">Report a map error</a>
      </div>
    </div>
  );
}

export default function App() {
  return (
    <div className="relative flex min-h-screen flex-col bg-white font-['Open_Sans','Noto_Sans',sans-serif] text-[13px] text-[#333]">
      <hr className="absolute inset-x-0 top-[140px] border-[#eee]" />
      <NavBar />

      <main className="relative flex flex-1 pb-[3px] pt-2">
        <section className="flex w-7/12 pl-[5px] pr-1">
          <div className="flex w-full flex-col border border-[#ccc]">
            <div className="flex flex-1 flex-col pl-[10px] pr-[8px] pt-[10px]">
              <div className="flex gap-[2px]">
                {tabs.map((tab) => (
                  <button key={tab} className="h-[39px] rounded-t border border-b-0 border-[#1c3d60] bg-[#2e71ad] px-[21px] pt-px text-white">
                    {tab}
                  </button>
                ))}
              </div>
              <SearchForm />
              <AssetTable />
            </div>
            <ScrollBar />
          </div>
        </section>

        <section className="relative w-5/12 pl-[6px] pr-px">
          <div className="h-full border border-[#ccc] p-[5px]">
            <FleetMap />
          </div>
          <span className="absolute bottom-0 right-px size-[10px] bg-[#ff0000]" />
        </section>
      </main>

      <footer className="h-[38px] bg-black pr-[10px] text-right text-sm leading-[38px] text-white">
        Copyright © 2019 Telitek Wireless Inc. All rights reserved.
      </footer>
    </div>
  );
}
